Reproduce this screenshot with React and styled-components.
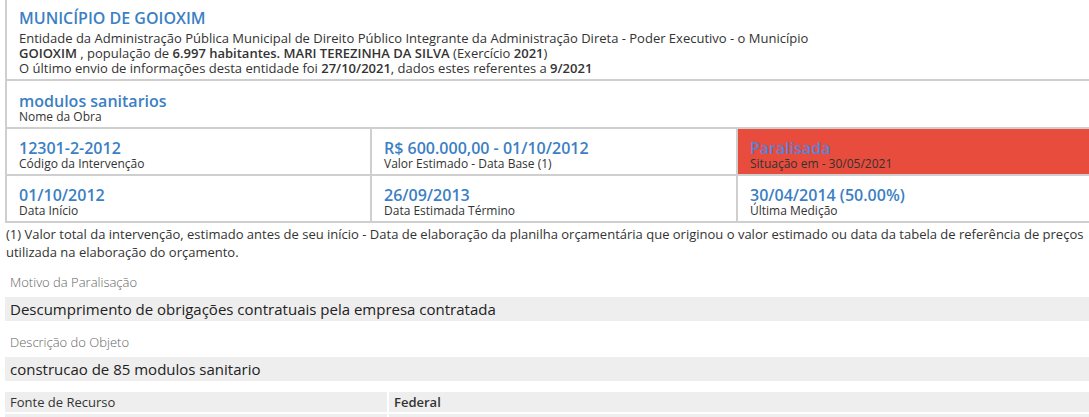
import React from 'react';
import styled, { createGlobalStyle } from 'styled-components';

const Global = createGlobalStyle`
  html, body { margin: 0; padding: 0; background: #fff; }
  body {
    font-family: "Open Sans", "Liberation Sans", sans-serif;
    color: #333;
    overflow: hidden;
  }
`;

const Page = styled.div`
  width: 1095px;
  padding-left: 5px;
`;

const Box = styled.div`
  border-left: 2px solid #cfcfcf;
`;

const Header = styled.div`
  padding: 8px 12px 3px;
  border-bottom: 2px solid #cfcfcf;
`;

const Title = styled.div`
  font-size: 16px;
  line-height: 20px;
  font-weight: 600;
  color: #3b7fc4;
  margin-bottom: 3px;
`;

const Line = styled.div`
  font-size: 13px;
  line-height: 15px;
  color: #333;
  white-space: nowrap;
  b { font-weight: 600; }
`;

const Section = styled.div`
  padding: 12px 12px 4px;
  border-bottom: 2px solid #cfcfcf;
`;

const Row = styled.div`
  display: grid;
  grid-template-columns: 365px 366px 1fr;
`;

const Cell = styled.div`
  padding: 11px 12px 4px;
  border-right: ${p => (p.$last ? '0' : '2px solid #cfcfcf')};
  border-bottom: 2px solid #cfcfcf;
  background: ${p => (p.$alert ? '#e74c3c' : 'transparent')};
`;

const Value = styled.div`
  font-size: 16px;
  line-height: 17px;
  font-weight: 600;
  color: ${p => (p.$alert ? '#5b80d6' : '#3b7fc4')};
  white-space: nowrap;
`;

const Caption = styled.div`
  font-size: 12px;
  line-height: 13px;
  color: #333;
  white-space: nowrap;
`;

const Note = styled.p`
  margin: 2px 0 5px 1px;
  font-size: 13px;
  line-height: 18px;
  color: #333;
`;

const FieldLabel = styled.div`
  margin-top: 13px;
  padding: 0 5px;
  font-size: 13px;
  line-height: 16px;
  font-weight: 300;
  color: #666;
`;

const FieldBar = styled.div`
  margin-top: 7px;
  padding: 0 5px;
  height: 24px;
  line-height: 24px;
  background: #eeeeee;
  font-size: 15px;
  color: #222;
  white-space: nowrap;
`;

const InfoTable = styled.div`
  margin-top: 11px;
  display: grid;
  grid-template-columns: 382px 1fr;
  gap: 2px;
`;

const InfoCell = styled.div`
  background: #eeeeee;
  height: 20px;
  line-height: 20px;
  padding: 0 5px;
  font-size: 13px;
  font-weight: ${p => (p.$strong ? 600 : 400)};
  color: #333;
  white-space: nowrap;
`;

const cells = [
  [
    { v: '12301-2-2012', c: 'Código da Intervenção' },
    { v: 'R$ 600.000,00 - 01/10/2012', c: 'Valor Estimado - Data Base (1)' },
    { v: 'Paralisada', c: 'Situação em - 30/05/2021', alert: true },
  ],
  [
    { v: '01/10/2012', c: 'Data Início' },
    { v: '26/09/2013', c: 'Data Estimada Término' },
    { v: '30/04/2014 (50.00%)', c: 'Última Medição' },
  ],
];

export default function App() {
  return (
    <Page>
      <Global />
      <Box>
        <Header>
          <Title>MUNICÍPIO DE GOIOXIM</Title>
          <Line>
            Entidade da Administração Pública Municipal de Direito Público Integrante da Administração Direta - Poder Executivo - o Município
          </Line>
          <Line>
            <b>GOIOXIM</b> , população de <b>6.997 habitantes.</b> <b>MARI TEREZINHA DA SILVA</b> (Exercício <b>2021</b>)
          </Line>
          <Line>
            O último envio de informações desta entidade foi <b>27/10/2021</b>, dados estes referentes a <b>9/2021</b>
          </Line>
        </Header>
        <Section>
          <Value>modulos sanitarios</Value>
          <Caption>Nome da Obra</Caption>
        </Section>
        {cells.map((row, i) => (
          <Row key={i}>
            {row.map((cell, j) => (
              <Cell key={j} $alert={cell.alert} $last={j === 2}>
                <Value $alert={cell.alert}>{cell.v}</Value>
                <Caption>{cell.c}</Caption>
              </Cell>
            ))}
          </Row>
        ))}
      </Box>
      <Note>
        (1) Valor total da intervenção, estimado antes de seu início - Data de elaboração da planilha orçamentária que originou o valor estimado ou data da tabela de referência de preços utilizada na elaboração do orçamento.
      </Note>
      <FieldLabel>Motivo da Paralisação</FieldLabel>
      <FieldBar>Descumprimento de obrigações contratuais pela empresa contratada</FieldBar>
      <FieldLabel>Descrição do Objeto</FieldLabel>
      <FieldBar>construcao de 85 modulos sanitario</FieldBar>
      <InfoTable>
        <InfoCell>Fonte de Recurso</InfoCell>
        <InfoCell $strong>Federal</InfoCell>
        <InfoCell>&nbsp;</InfoCell>
        <InfoCell>&nbsp;</InfoCell>
      </InfoTable>
    </Page>
  );
}
